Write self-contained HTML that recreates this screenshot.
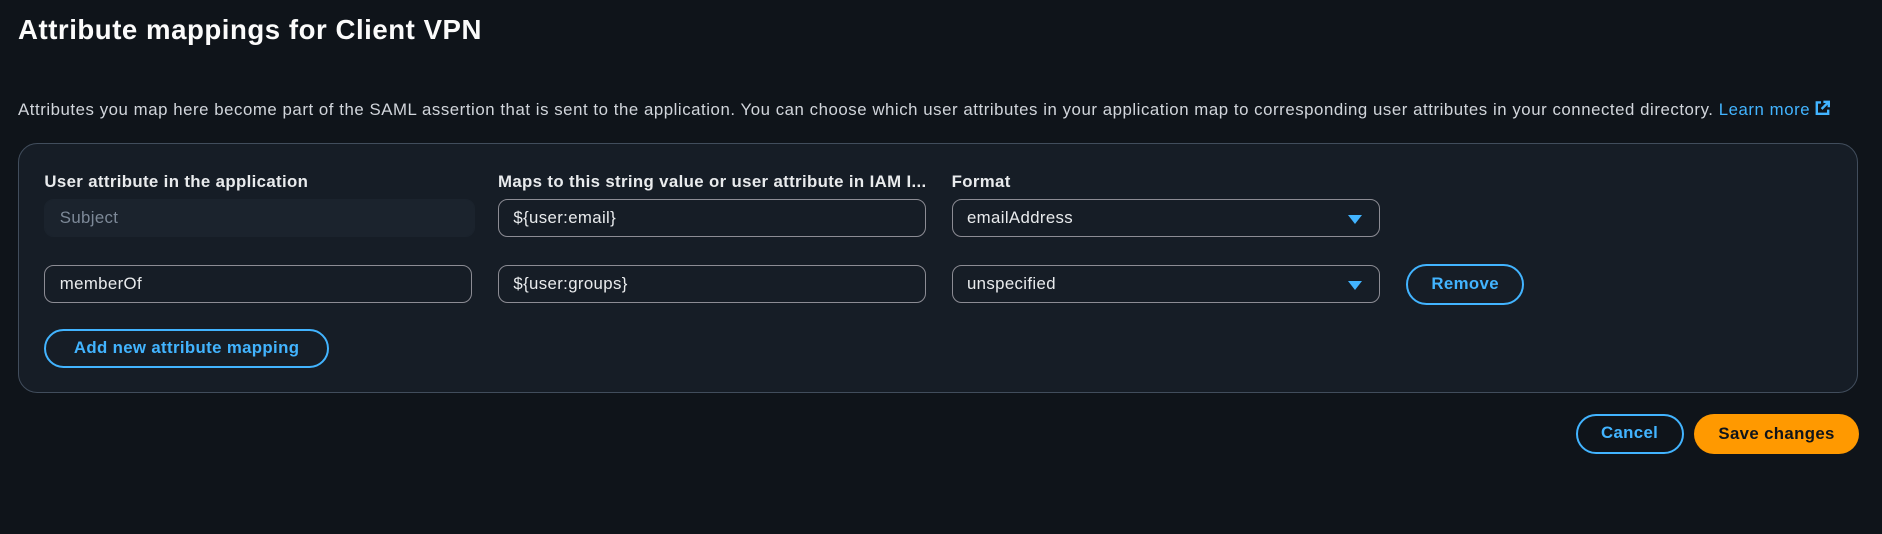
<!DOCTYPE html>
<html><head><meta charset="utf-8">
<style>
html,body{margin:0;padding:0;background:#0f141a;width:1882px;height:534px;overflow:hidden}
#w{zoom:1.2;position:relative;width:1568px;height:445px;font-family:"Liberation Sans",sans-serif;color:#d1d5db;font-size:14px;letter-spacing:0.3px}
.a{position:absolute}
h1{position:absolute;left:15px;top:12px;margin:0;font-size:23px;font-weight:bold;color:#fbfbfb;letter-spacing:0.45px}
.desc{left:15px;top:83px;white-space:nowrap;letter-spacing:0.46px}
.link{color:#42b4ff}
.box{left:15px;top:119px;width:1532px;height:207px;border:1px solid #414d5c;border-radius:16px;background:#161d26}
.lab{font-weight:bold;color:#e9ebed;top:143px;white-space:nowrap;letter-spacing:0.3px}
.in{height:30px;border:1px solid #8c8c94;border-radius:8px;box-sizing:content-box;padding:0 12px;line-height:30px;color:#e9ebed;background:#161d26}
.dis{background:#1b232d;border-color:#1b232d;color:#7d8998}
.btn{border:2px solid #42b4ff;color:#42b4ff;border-radius:18px;font-weight:bold;text-align:center;box-sizing:border-box}
.tri{position:absolute;right:14px;top:12px;width:0;height:0;border-left:6px solid transparent;border-right:6px solid transparent;border-top:8px solid #42b4ff}
</style></head><body><div id="w">
<h1>Attribute mappings for Client VPN</h1>
<div class="a desc">Attributes you map here become part of the SAML assertion that is sent to the application. You can choose which user attributes in your application map to corresponding user attributes in your connected directory. <span class="link">Learn more <svg width="13" height="13" viewBox="0 0 13 13" style="vertical-align:-1px"><path d="M5 2H1.5v9.5H11V8M7 1.5h4.5V6M11.5 1.5L5.5 7.5" fill="none" stroke="#42b4ff" stroke-width="2"/></svg></span></div>
<div class="a box"></div>
<div class="a lab" style="left:37px">User attribute in the application</div>
<div class="a lab" style="left:415px;width:356px;overflow:hidden">Maps to this string value or user attribute in IAM I...</div>
<div class="a lab" style="left:793px">Format</div>
<div class="a in dis" style="left:37px;top:166px;width:333px">Subject</div>
<div class="a in" style="left:415px;top:166px;width:331px">${user:email}</div>
<div class="a in" style="left:793px;top:166px;width:331px">emailAddress<span class="tri"></span></div>
<div class="a in" style="left:37px;top:221px;width:331px">memberOf</div>
<div class="a in" style="left:415px;top:221px;width:331px">${user:groups}</div>
<div class="a in" style="left:793px;top:221px;width:331px">unspecified<span class="tri"></span></div>
<div class="a btn" style="left:1172px;top:220px;width:98px;height:34px;line-height:30px">Remove</div>
<div class="a btn" style="left:37px;top:274px;width:237px;height:33px;line-height:29px">Add new attribute mapping</div>
<div class="a btn" style="left:1313px;top:345px;width:90px;height:33px;line-height:29px">Cancel</div>
<div class="a" style="left:1412px;top:345px;width:137px;height:33px;line-height:33px;background:#ff9900;border-radius:17px;color:#0f141a;font-weight:bold;text-align:center">Save changes</div>
</div></body></html>
